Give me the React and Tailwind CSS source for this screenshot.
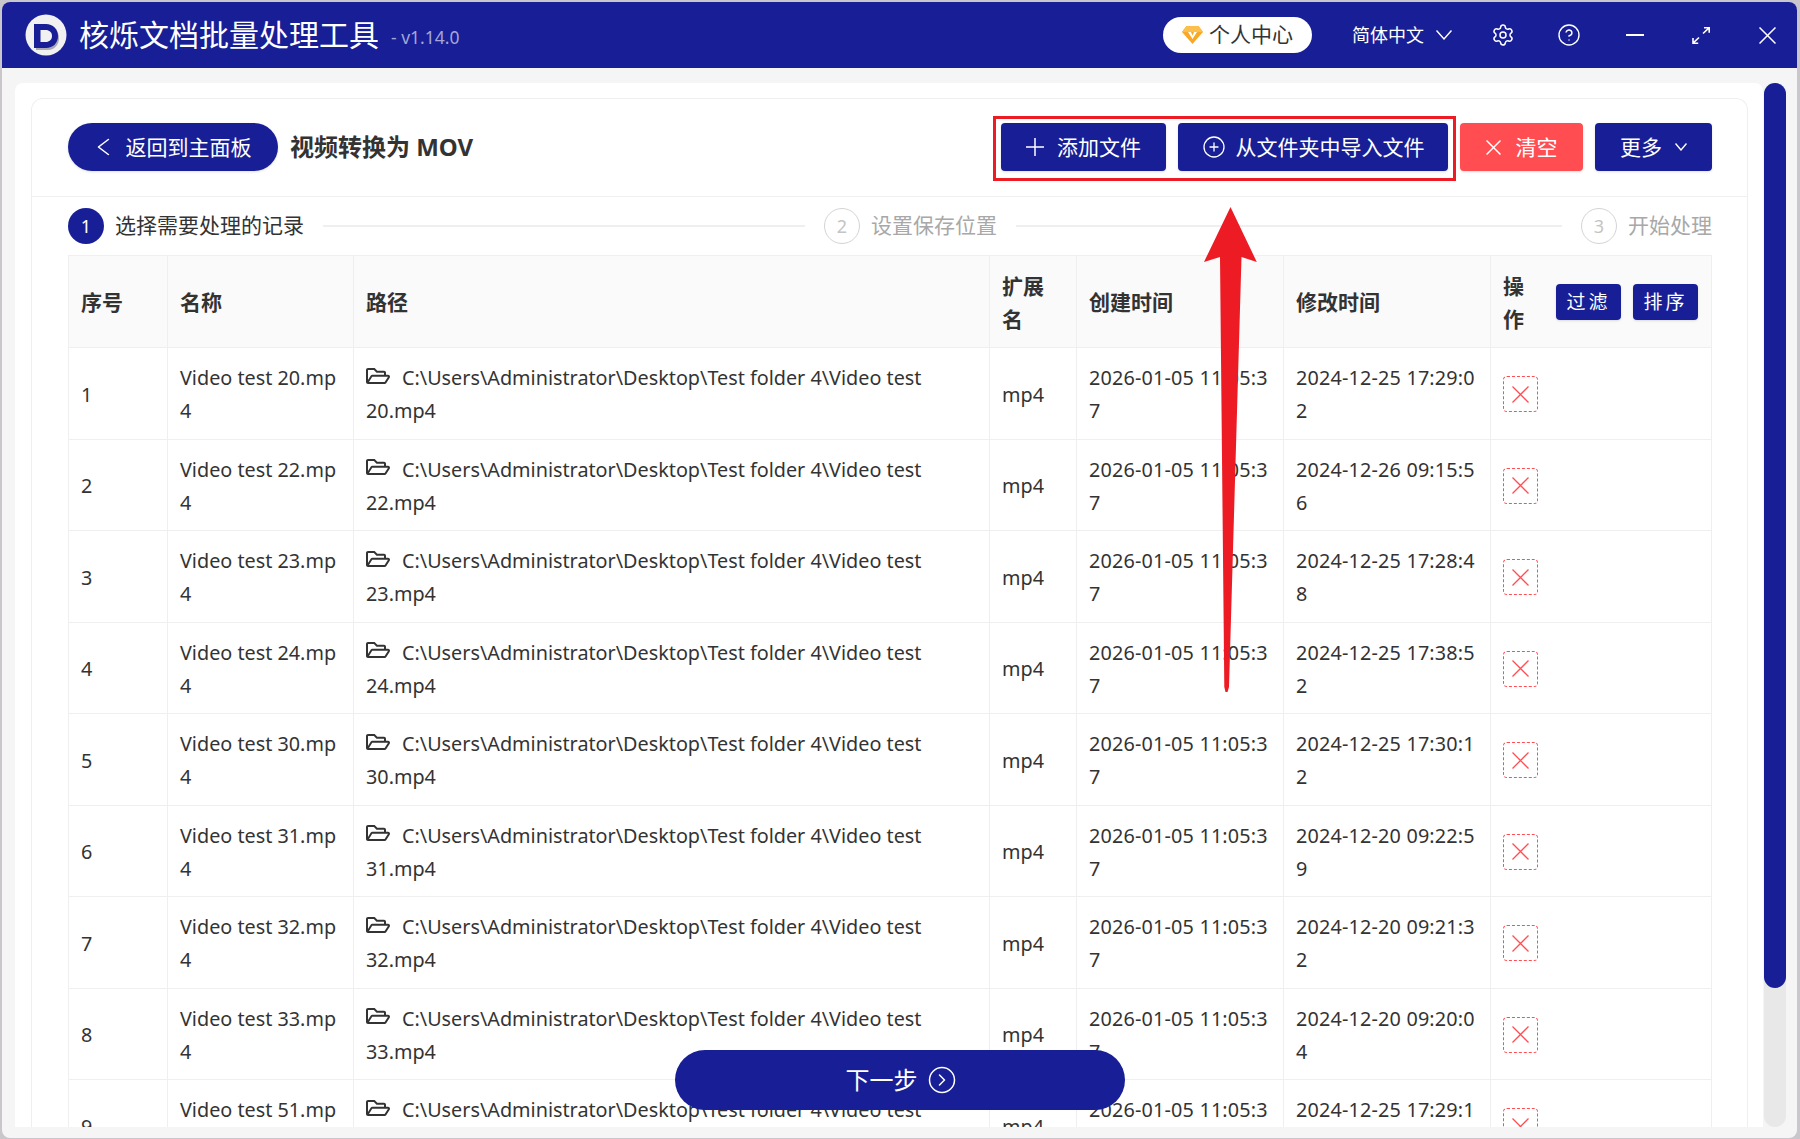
import React from "react";
import { CirclePlus, Settings, CircleHelp, CircleChevronRight } from "lucide-react";
import { FaRegFolderOpen } from "react-icons/fa";

const font = "font-['Noto_Sans','Noto_Sans_CJK_SC',sans-serif]";

const rows = [
  { n: 1, name: "20", created: "2026-01-05 11:05:37", modified: "2024-12-25 17:29:02" },
  { n: 2, name: "22", created: "2026-01-05 11:05:37", modified: "2024-12-26 09:15:56" },
  { n: 3, name: "23", created: "2026-01-05 11:05:37", modified: "2024-12-25 17:28:48" },
  { n: 4, name: "24", created: "2026-01-05 11:05:37", modified: "2024-12-25 17:38:52" },
  { n: 5, name: "30", created: "2026-01-05 11:05:37", modified: "2024-12-25 17:30:12" },
  { n: 6, name: "31", created: "2026-01-05 11:05:37", modified: "2024-12-20 09:22:59" },
  { n: 7, name: "32", created: "2026-01-05 11:05:37", modified: "2024-12-20 09:21:32" },
  { n: 8, name: "33", created: "2026-01-05 11:05:37", modified: "2024-12-20 09:20:04" },
  { n: 9, name: "51", created: "2026-01-05 11:05:37", modified: "2024-12-25 17:29:11" },
];

const cols = "grid grid-cols-[99px_186px_636px_87px_207px_207px_221px]";
const cell = "border-r border-[#efefef] px-3 pt-0.5 flex items-center min-w-0";

// thin glyphs, the box is exactly the drawn size
function Cross({ size, width = 1.5 }) {
  return (
    <svg className="shrink-0" width={size} height={size} viewBox={`0 0 ${size} ${size}`} fill="none" stroke="currentColor" strokeWidth={width}>
      <path d={`M0.500 0.500L${size - 0.5} ${size - 0.5}M${size - 0.5} 0.500L0.500 ${size - 0.5}`} />
    </svg>
  );
}

function Vee({ w, h, width = 1.4 }) {
  return (
    <svg className="shrink-0" width={w} height={h} viewBox={`0 0 ${w} ${h}`} fill="none" stroke="currentColor" strokeWidth={width}>
      <path d={`M0.500 0.500L${w / 2} ${h - 1}L${w - 0.5} 0.500`} />
    </svg>
  );
}

function Step({ num, label, active }) {
  return (
    <div className="flex items-center gap-[11px] shrink-0">
      <div
        className={
          active
            ? "w-9 h-9 rounded-full bg-[#181f96] text-white flex items-center justify-center text-lg"
            : "w-9 h-9 rounded-full border-[1.5px] border-[#d4d4d4] text-[#c4c4c4] flex items-center justify-center text-lg"
        }
      >
        {num}
      </div>
      <span className={active ? "text-[21px] text-[#333]" : "text-[21px] text-[#a8a8a8]"}>{label}</span>
    </div>
  );
}

function Logo() {
  return (
    <svg className="shrink-0" width="42" height="42" viewBox="0 0 42 42">
      <circle cx="21" cy="21" r="20.500" fill="#f1f1f1" />
      <path d="M11 13h12c7 0 11 5 11 11s-4 12-11 12H11z" fill="#a9a9b4" />
      <path d="M9 10h12c7 0 12 5 12 12s-5 12-12 12H9z" fill="#181f96" />
      <path d="M15.500 16h5c4 0 6.500 2.500 6.500 6s-2.500 6-6.500 6h-5z" fill="#f1f1f1" />
    </svg>
  );
}

function Gem() {
  return (
    <svg className="shrink-0" width="21" height="18" viewBox="0 0 21 18">
      <path d="M4.500 0h12L21 6l-10.500 12L0 6z" fill="#f9a825" />
      <path d="M4.500 0h12L21 6H0z" fill="#fbbf4d" />
      <path d="M6 6h3l1.500 3.500L12 6h3l-4.500 7z" fill="#fff" />
    </svg>
  );
}

function Expand() {
  return (
    <svg className="shrink-0" width="18" height="17" viewBox="0 0 18 17" fill="none" stroke="currentColor" strokeWidth="1.600">
      <path d="M11 6.500L17 0.800M12 0.800h5.200v5M7 10.500L1 16.200M1 11v5.200h5.200" />
    </svg>
  );
}

function HeadButton({ className, children }) {
  return (
    <button className={`h-12 text-white rounded-sm flex items-center justify-center text-[21px] shadow-sm ${className}`}>
      {children}
    </button>
  );
}

export default function App() {
  return (
    <div className={`${font} w-[1800px] h-[1139px] bg-[#c9c6cc] pt-0.5 pl-0.5 pr-[3px] pb-px overflow-hidden`}>
      <div className="relative h-full rounded-lg overflow-hidden bg-[#f5f5f5] flex flex-col">
        {/* title bar */}
        <div className="h-[66px] shrink-0 bg-[#181f96] flex items-center text-white pl-[23px]">
          <Logo />
          <span className="ml-3 text-[30px] leading-none">核烁文档批量处理工具</span>
          <span className="ml-3 mt-1 text-[17.500px] text-[#a3a6d6]">- v1.14.0</span>
          <div className="ml-auto mr-[21px] flex items-center">
            <div className="w-[149px] h-9 rounded-full bg-white flex items-center justify-center gap-1.5 text-[#333] text-[21px]">
              <Gem />
              个人中心
            </div>
            <div className="ml-10 flex items-center gap-3 text-lg">
              简体中文
              <Vee w={16} h={10} />
            </div>
            <Settings className="ml-[39px]" size={24} strokeWidth={1.5} />
            <CircleHelp className="ml-[42px]" size={24} strokeWidth={1.4} />
            <div className="ml-[45px] w-[18px] h-0.5 bg-white" />
            <div className="ml-12">
              <Expand />
            </div>
            <div className="ml-[49px]">
              <Cross size={17} />
            </div>
          </div>
        </div>

        {/* body */}
        <div className="flex-1 min-h-0 flex pt-[15px] pl-[13px] pb-[11px] pr-[11px]">
          <div className="flex-1 min-w-0 bg-white pt-[15px] pl-[16px] pr-[15px] rounded-t-lg overflow-hidden">
            <div className="h-full border border-b-0 border-[#efefef] rounded-t-xl">
              <div className="h-[98px] border-b border-[#efefef] pl-[36px] pr-[35px] pb-px flex items-center">
                <button className="w-[210px] h-12 rounded-full bg-[#181f96] text-white flex items-center justify-center gap-3.5 text-[21px] shadow-sm">
                  <svg className="shrink-0 rotate-90" width="17" height="12" viewBox="0 0 17 12" fill="none" stroke="currentColor" strokeWidth="1.500">
                    <path d="M0.500 0.500L8.500 11L16.500 0.500" />
                  </svg>
                  <span className="pt-0.5">返回到主面板</span>
                </button>
                <h1 className="ml-3 text-2xl font-bold text-[#333]">视频转换为 MOV</h1>
                <div className="ml-auto flex gap-3">
                  <HeadButton className="w-[165px] gap-[13px] bg-[#181f96]">
                    <svg className="shrink-0" width="18" height="18" viewBox="0 0 18 18" fill="none" stroke="currentColor" strokeWidth="1.500">
                      <path d="M9 0v18M0 9h18" />
                    </svg>
                    <span className="pt-0.5">添加文件</span>
                  </HeadButton>
                  <HeadButton className="w-[270px] gap-2.5 bg-[#181f96]">
                    <CirclePlus size={24} strokeWidth={1.3} />
                    <span className="pt-0.5">从文件夹中导入文件</span>
                  </HeadButton>
                  <HeadButton className="w-[123px] gap-[15px] bg-[#ff4d52]">
                    <Cross size={15} />
                    <span className="pt-0.5">清空</span>
                  </HeadButton>
                  <HeadButton className="w-[117px] gap-[13px] bg-[#181f96]">
                    <span className="pt-0.5">更多</span>
                    <Vee w={12} h={8} />
                  </HeadButton>
                </div>
              </div>

              <div className="pl-[36px] pr-[35px]">
                <div className="h-[58px] flex items-center gap-[19px]">
                  <Step num="1" label="选择需要处理的记录" active />
                  <div className="w-[482px] h-0.5 bg-[#efefef]" />
                  <Step num="2" label="设置保存位置" />
                  <div className="flex-1 h-0.5 bg-[#efefef]" />
                  <Step num="3" label="开始处理" />
                </div>

                <div className="border-t border-l border-[#efefef] text-[19.800px] text-[#333] leading-[33px]">
                  <div className={`${cols} h-[92px] bg-[#fafafa] border-b border-[#efefef] font-bold text-[21px]`}>
                    <div className={cell}>序号</div>
                    <div className={cell}>名称</div>
                    <div className={cell}>路径</div>
                    <div className={cell}>扩展名</div>
                    <div className={cell}>创建时间</div>
                    <div className={cell}>修改时间</div>
                    <div className={`${cell} justify-between`}>
                      <span className="w-5">操作</span>
                      <div className="flex gap-3 font-normal -mt-0.5 mr-px">
                        <button className="w-[65px] h-9 pt-0.5 rounded-sm bg-[#181f96] text-white text-[19px] tracking-[3px] shadow-sm">过滤</button>
                        <button className="w-[65px] h-9 pt-0.5 rounded-sm bg-[#181f96] text-white text-[19px] tracking-[3px] shadow-sm">排序</button>
                      </div>
                    </div>
                  </div>
                  {rows.map((r) => (
                    <div key={r.n} className={`${cols} h-[91.5px] border-b border-[#efefef]`}>
                      <div className={cell}>{r.n}</div>
                      <div className={`${cell} [word-break:break-all]`}>Video test {r.name}.mp4</div>
                      <div className={cell}>
                        <div>
                          <FaRegFolderOpen className="inline-block mr-3 -mt-2 text-[#333]" size={24} />
                          C:\Users\Administrator\Desktop\Test folder 4\Video test {r.name}.mp4
                        </div>
                      </div>
                      <div className={cell}>mp4</div>
                      <div className={`${cell} [word-break:break-all] tracking-[0.18px]`}>{r.created}</div>
                      <div className={`${cell} [word-break:break-all] tracking-[0.18px]`}>{r.modified}</div>
                      <div className={cell}>
                        <div className="w-[35px] h-9 border border-dashed border-[#ff4d52] rounded-sm flex items-center justify-center text-[#ff4d52]">
                          <Cross size={17} width={1.3} />
                        </div>
                      </div>
                    </div>
                  ))}
                </div>
              </div>
            </div>
          </div>

          {/* scrollbar */}
          <div className="w-[22px] ml-[1px] bg-[#e8e8e8] rounded-full shrink-0">
            <div className="h-[905px] bg-[#181f96] rounded-full" />
          </div>
        </div>

        {/* next step button */}
        <button className="absolute left-[673px] top-[1048px] w-[450px] h-[60px] rounded-[30px] bg-[#181f96] text-white text-2xl flex items-center justify-center gap-[9px] pl-0.5">
          下一步
          <CircleChevronRight size={30} strokeWidth={1.2} />
        </button>

        {/* annotation: red box + arrow */}
        <div className="absolute left-[991px] top-[114px] w-[463px] h-[65px] border-[3px] border-[#ed1c24] pointer-events-none" />
        <svg className="absolute left-[1198px] top-[203px] pointer-events-none" width="64" height="492" viewBox="0 0 64 492">
          <polygon points="30.500,2 56.800,57 41.500,52 29,482 27.500,487 25.500,487 24.300,482 20,52 4,57" fill="#ed1c24" />
        </svg>
      </div>
    </div>
  );
}
